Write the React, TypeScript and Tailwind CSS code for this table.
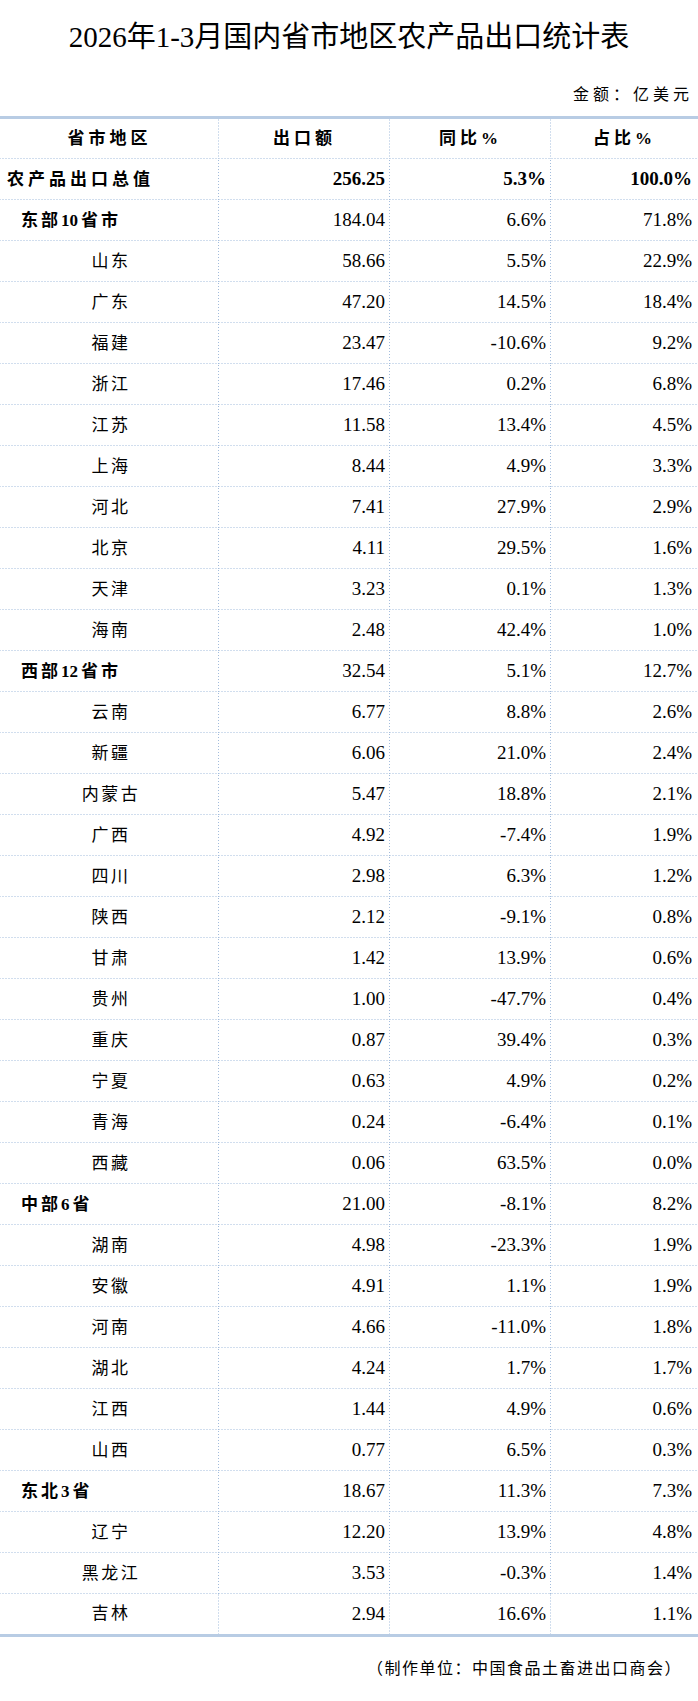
const font = "font-['Liberation_Serif','Noto_Sans_CJK_SC',serif]";

type Row = { name: string; amt: string; yoy: string; share: string; kind: "total" | "group" | "item" };

const rows: Row[] = [
  { name: "农产品出口总值", amt: "256.25", yoy: "5.3%", share: "100.0%", kind: "total" },
  { name: "东部10省市", amt: "184.04", yoy: "6.6%", share: "71.8%", kind: "group" },
  { name: "山东", amt: "58.66", yoy: "5.5%", share: "22.9%", kind: "item" },
  { name: "广东", amt: "47.20", yoy: "14.5%", share: "18.4%", kind: "item" },
  { name: "福建", amt: "23.47", yoy: "-10.6%", share: "9.2%", kind: "item" },
  { name: "浙江", amt: "17.46", yoy: "0.2%", share: "6.8%", kind: "item" },
  { name: "江苏", amt: "11.58", yoy: "13.4%", share: "4.5%", kind: "item" },
  { name: "上海", amt: "8.44", yoy: "4.9%", share: "3.3%", kind: "item" },
  { name: "河北", amt: "7.41", yoy: "27.9%", share: "2.9%", kind: "item" },
  { name: "北京", amt: "4.11", yoy: "29.5%", share: "1.6%", kind: "item" },
  { name: "天津", amt: "3.23", yoy: "0.1%", share: "1.3%", kind: "item" },
  { name: "海南", amt: "2.48", yoy: "42.4%", share: "1.0%", kind: "item" },
  { name: "西部12省市", amt: "32.54", yoy: "5.1%", share: "12.7%", kind: "group" },
  { name: "云南", amt: "6.77", yoy: "8.8%", share: "2.6%", kind: "item" },
  { name: "新疆", amt: "6.06", yoy: "21.0%", share: "2.4%", kind: "item" },
  { name: "内蒙古", amt: "5.47", yoy: "18.8%", share: "2.1%", kind: "item" },
  { name: "广西", amt: "4.92", yoy: "-7.4%", share: "1.9%", kind: "item" },
  { name: "四川", amt: "2.98", yoy: "6.3%", share: "1.2%", kind: "item" },
  { name: "陕西", amt: "2.12", yoy: "-9.1%", share: "0.8%", kind: "item" },
  { name: "甘肃", amt: "1.42", yoy: "13.9%", share: "0.6%", kind: "item" },
  { name: "贵州", amt: "1.00", yoy: "-47.7%", share: "0.4%", kind: "item" },
  { name: "重庆", amt: "0.87", yoy: "39.4%", share: "0.3%", kind: "item" },
  { name: "宁夏", amt: "0.63", yoy: "4.9%", share: "0.2%", kind: "item" },
  { name: "青海", amt: "0.24", yoy: "-6.4%", share: "0.1%", kind: "item" },
  { name: "西藏", amt: "0.06", yoy: "63.5%", share: "0.0%", kind: "item" },
  { name: "中部6省", amt: "21.00", yoy: "-8.1%", share: "8.2%", kind: "group" },
  { name: "湖南", amt: "4.98", yoy: "-23.3%", share: "1.9%", kind: "item" },
  { name: "安徽", amt: "4.91", yoy: "1.1%", share: "1.9%", kind: "item" },
  { name: "河南", amt: "4.66", yoy: "-11.0%", share: "1.8%", kind: "item" },
  { name: "湖北", amt: "4.24", yoy: "1.7%", share: "1.7%", kind: "item" },
  { name: "江西", amt: "1.44", yoy: "4.9%", share: "0.6%", kind: "item" },
  { name: "山西", amt: "0.77", yoy: "6.5%", share: "0.3%", kind: "item" },
  { name: "东北3省", amt: "18.67", yoy: "11.3%", share: "7.3%", kind: "group" },
  { name: "辽宁", amt: "12.20", yoy: "13.9%", share: "4.8%", kind: "item" },
  { name: "黑龙江", amt: "3.53", yoy: "-0.3%", share: "1.4%", kind: "item" },
  { name: "吉林", amt: "2.94", yoy: "16.6%", share: "1.1%", kind: "item" },
];

// dotted rules drawn as repeating gradients (1px dot, 3px period)
const hLine =
  "bg-[linear-gradient(to_right,#a3bcdc_1px,transparent_1px)] bg-[length:3px_1px] bg-repeat-x bg-bottom";
const vLine =
  "bg-[linear-gradient(to_bottom,#a3bcdc_1px,transparent_1px)] bg-[length:1px_3px] bg-repeat-y bg-right";

function Cell({ children, className = "", last = false }: { children: React.ReactNode; className?: string; last?: boolean }) {
  return <div className={`flex items-center h-full ${last ? "" : vLine} ${className}`}>{children}</div>;
}

// keep digit runs tight inside spaced-out CJK labels
function Label({ text }: { text: string }) {
  const parts = text.split(/(\d+)/).filter(Boolean);
  return (
    <span>
      {parts.map((p, i) =>
        /^\d+$/.test(p) ? (
          <span key={i} className="tracking-normal mr-[3px]">
            {p}
          </span>
        ) : (
          <span key={i}>{p}</span>
        )
      )}
    </span>
  );
}

export default function App() {
  return (
    <div className={`w-[698px] h-[1701px] bg-white text-black ${font}`}>
      <div className="h-[72px] flex items-center justify-center pt-[2px]">
        <h1 className="text-[29px] leading-none">2026年1-3月国内省市地区农产品出口统计表</h1>
      </div>
      <div className="h-[44px] flex items-center justify-end pr-[5px] pt-[2px]">
        <span className="text-[16px] tracking-[4px] leading-none">金额：亿美元</span>
      </div>

      <div className="border-t-[3px] border-b-[3px] border-[#b8cce4]">
        <div className={`grid grid-cols-[219px_171px_161px_147px] h-[40px] ${hLine} font-bold text-[17px] tracking-[4px]`}>
          <Cell className="justify-center">省市地区</Cell>
          <Cell className="justify-center">出口额</Cell>
          <Cell className="justify-center">同比%</Cell>
          <Cell className="justify-center" last>占比%</Cell>
        </div>
        {rows.map((r, i) => {
          const isLast = i === rows.length - 1;
          const bold = r.kind === "total";
          return (
            <div
              key={r.name}
              className={`grid grid-cols-[219px_171px_161px_147px] ${isLast ? "h-[40px]" : `h-[41px] ${hLine}`}`}
            >
              <Cell
                className={
                  r.kind === "item"
                    ? "justify-center text-[17px] tracking-[2.5px] pl-[3px]"
                    : r.kind === "total"
                    ? "pl-[7px] font-bold text-[17px] tracking-[4px]"
                    : "pl-[21px] font-bold text-[17px] tracking-[3px]"
                }
              >
                <Label text={r.name} />
              </Cell>
              <Cell className={`justify-end pr-[5px] text-[19px] ${bold ? "font-bold" : ""}`}>{r.amt}</Cell>
              <Cell className={`justify-end pr-[5px] text-[19px] ${bold ? "font-bold" : ""}`}>{r.yoy}</Cell>
              <Cell className={`justify-end pr-[6px] text-[19px] ${bold ? "font-bold" : ""}`} last>
                {r.share}
              </Cell>
            </div>
          );
        })}
      </div>

      <div className="h-[64px] flex items-center justify-end pr-[16px]">
        <span className="text-[16px] tracking-[1.5px] leading-none">（制作单位：中国食品土畜进出口商会）</span>
      </div>
    </div>
  );
}
